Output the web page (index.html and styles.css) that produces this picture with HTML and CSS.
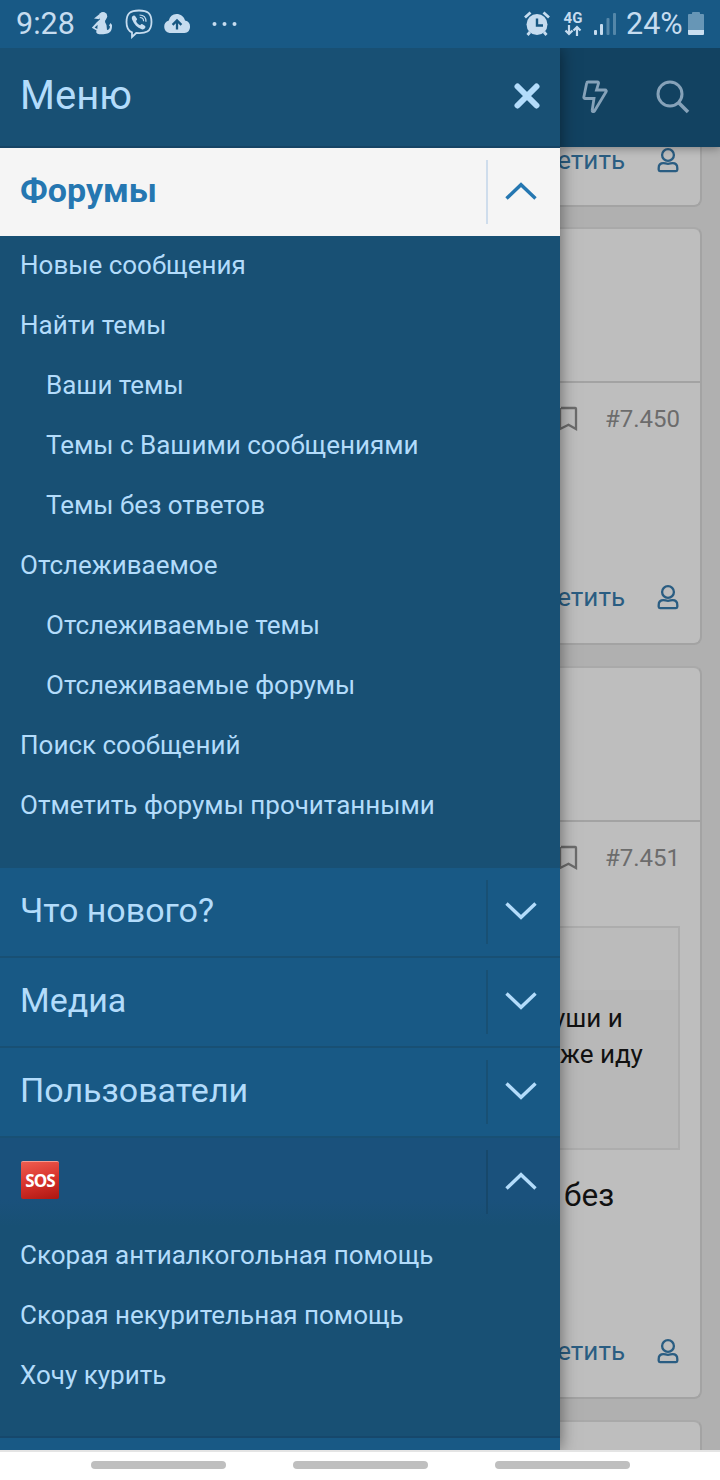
FILE: index.html
```html
<!DOCTYPE html>
<html lang="ru">
<head>
    <meta charset="UTF-8">
    <meta name="viewport" content="width=device-width, initial-scale=1.0">
    <title>Меню</title>
    <link rel="stylesheet" href="styles.css">
</head>
<body>
    <svg width="0" height="0" class="defs">
        <symbol id="chevron" viewBox="0 0 32 18">
            <path d="M1.500 1.500L16 15.300 30.500 1.500" fill="none" stroke="currentColor" stroke-width="3.400"/>
        </symbol>
        <symbol id="user" viewBox="0 0 22 26">
            <circle cx="11" cy="8" r="5.900" fill="none" stroke="currentColor" stroke-width="2.300"/>
            <path d="M6.500 16.200c1.500 0 2.500.6 4.500.6s3-.6 4.500-.6c3.200 0 4.800 2.200 4.800 4.800v1.800a1.300 1.300 0 0 1-1.300 1.300H3a1.300 1.300 0 0 1-1.300-1.300V21c0-2.600 1.600-4.800 4.800-4.800z" fill="none" stroke="currentColor" stroke-width="2.300"/>
        </symbol>
        <symbol id="bookmark" viewBox="0 0 18 26">
            <path d="M1 2h14.200a.8.8 0 0 1 .8.8V23l-7.500-4.300L0 23V2" fill="none" stroke="currentColor" stroke-width="2.300"/>
        </symbol>
    </svg>

    <div class="status-bar">
        <span class="clock">9:28</span>
        <svg class="ic-person" width="22" height="26" viewBox="0 0 22 26">
            <circle cx="12" cy="5.200" r="4.200" fill="currentColor"/>
            <path d="M8 3.500L3 7.500l5.500.8z" fill="currentColor"/>
            <path d="M9.500 8h5l-.5 3 1.500 3 .5 5c1.800 0 2.800-1.500 3-3.500l-1-1 1.500-2.500L21 14c.2 4-1 7.500-4.500 8.500-3 1-8 1-10 .2-1.500-.7-1.500-2-.9-3.200L.8 16.700 6 11z" fill="currentColor"/>
            <path d="M3.600 16.500l3-2.700-.3 4.200z" fill="#185782"/>
        </svg>
        <svg class="ic-viber" width="28" height="30" viewBox="0 0 28 30">
            <path d="M14 1.500C5.500 1.500 1.500 4 1.500 13c0 6 1.800 9 5.500 10.300V28l4.200-4c9.300.8 15.300-1 15.300-11 0-9-4-11.500-12.500-11.500z" fill="none" stroke="currentColor" stroke-width="1.800"/>
            <path d="M8.700 6.500C6.500 7.500 6.500 9 7.200 10.700c2 4.700 5 7.800 9.500 9.500 1.600.6 3-.3 3.700-2 .3-.8-.2-1.300-3-3-.8-.5-1.300 0-2.200 1-2-.7-3.700-2.500-4.200-4.400 1.300-1 1.300-1.500.8-2.300-1.500-2.500-2-3.400-3.100-3z" fill="currentColor"/>
            <path d="M14.500 6c4 0 6.500 2.500 6.500 6.700M14.800 8.500c2.400 0 3.800 1.400 3.800 3.800" fill="none" stroke="currentColor" stroke-width="1.200"/>
        </svg>
        <svg class="ic-cloud" width="28" height="22" viewBox="0 0 28 22">
            <path d="M6.500 20a6.500 6.500 0 0 1-.7-12.600A8.500 8.500 0 0 1 13.500 1c4 0 7.600 2.500 8.500 6.400A6.400 6.400 0 0 1 21.500 20z" fill="currentColor"/>
            <path d="M14 16.500V8M9.600 11.900L14 7.500l4.400 4.400" fill="none" stroke="#185782" stroke-width="2.300"/>
        </svg>
        <svg class="ic-dots" width="26" height="6" viewBox="0 0 26 6" fill="currentColor">
            <circle cx="2.500" cy="3" r="2"/><circle cx="12.500" cy="3" r="2"/><circle cx="22.500" cy="3" r="2"/>
        </svg>
        <div class="status-right">
            <svg class="ic-alarm" width="26" height="26" viewBox="0 0 26 26">
                <circle cx="13" cy="13.500" r="10.500" fill="currentColor"/>
                <path d="M1 6.500l5.500-5M25 6.500l-5.500-5M6 21l-2.500 3M20 21l2.500 3" stroke="currentColor" stroke-width="2.800"/>
                <path d="M13 7.500v7h6" fill="none" stroke="#185782" stroke-width="2.400"/>
            </svg>
            <div class="network">
                <span>4G</span>
                <svg width="18" height="11" viewBox="0 0 18 11">
                    <path d="M5 0v9M1.500 5.500L5 9l3.500-3.500M13 11V2M9.500 5.500L13 2l3.500 3.500" fill="none" stroke="currentColor" stroke-width="2.200"/>
                </svg>
            </div>
            <svg class="ic-signal" width="22" height="24" viewBox="0 0 22 24" fill="currentColor">
                <rect x="0" y="18" width="3" height="5" rx="1"/>
                <rect x="6" y="12" width="3" height="11" rx="1"/>
                <rect x="12.500" y="6" width="3" height="17" rx="1" opacity=".35"/>
                <rect x="19" y="1" width="3" height="22" rx="1" opacity=".35"/>
            </svg>
            <span class="percent">24%</span>
            <svg class="ic-battery" width="16" height="24" viewBox="0 0 16 24">
                <path d="M4 2V1a1 1 0 0 1 1-1h6a1 1 0 0 1 1 1v1h3a1 1 0 0 1 1 1v15H0V3a1 1 0 0 1 1-1z" fill="#6796b6"/>
                <path d="M0 18h16v4a1 1 0 0 1-1 1H1a1 1 0 0 1-1-1z" fill="#c9def0"/>
            </svg>
        </div>
    </div>

    <div class="screen">
        <nav class="drawer">
            <div class="drawer-header">
                <span>Меню</span>
                <svg width="26" height="26" viewBox="0 0 26 26">
                    <path d="M3.500 3.500l19 19M22.500 3.500l-19 19" stroke="currentColor" stroke-width="6" stroke-linecap="round"/>
                </svg>
            </div>

            <div class="menu-row selected">
                <span class="menu-title">Форумы</span>
                <div class="toggle"><svg class="chevron up"><use href="#chevron"/></svg></div>
            </div>
            <div class="submenu">
                <a>Новые сообщения</a>
                <a>Найти темы</a>
                <a class="nested">Ваши темы</a>
                <a class="nested">Темы с Вашими сообщениями</a>
                <a class="nested">Темы без ответов</a>
                <a>Отслеживаемое</a>
                <a class="nested">Отслеживаемые темы</a>
                <a class="nested">Отслеживаемые форумы</a>
                <a>Поиск сообщений</a>
                <a>Отметить форумы прочитанными</a>
            </div>

            <div class="menu-row bordered">
                <span class="menu-title">Что нового?</span>
                <div class="toggle"><svg class="chevron"><use href="#chevron"/></svg></div>
            </div>
            <div class="menu-row bordered">
                <span class="menu-title">Медиа</span>
                <div class="toggle"><svg class="chevron"><use href="#chevron"/></svg></div>
            </div>
            <div class="menu-row bordered">
                <span class="menu-title">Пользователи</span>
                <div class="toggle"><svg class="chevron"><use href="#chevron"/></svg></div>
            </div>
            <div class="menu-row open">
                <span class="sos">SOS</span>
                <div class="toggle"><svg class="chevron up"><use href="#chevron"/></svg></div>
            </div>
            <div class="submenu last">
                <a>Скорая антиалкогольная помощь</a>
                <a>Скорая некурительная помощь</a>
                <a>Хочу курить</a>
            </div>
        </nav>

        <main class="page">
            <header class="page-header">
                <svg class="ic-bolt" width="26" height="34" viewBox="0 0 26 34">
                    <path d="M6 2h9.500c.8 0 1.200.6 1 1.300L14.500 10h8.700c.9 0 1.400.9.900 1.700L12.500 31c-.7 1.200-2.600.7-2.300-.8L12 18.500H3c-.8 0-1.300-.6-1.200-1.300L4.700 3c.1-.6.600-1 1.300-1z" fill="none" stroke="currentColor" stroke-width="2.800"/>
                </svg>
                <svg class="ic-search" width="34" height="34" viewBox="0 0 34 34">
                    <circle cx="14" cy="14" r="12" fill="none" stroke="currentColor" stroke-width="3"/>
                    <path d="M22.500 22.500L32 32" stroke="currentColor" stroke-width="3.600"/>
                </svg>
            </header>
            <div class="posts">
                <article class="post first">
                    <footer><span>етить</span><svg><use href="#user"/></svg></footer>
                </article>
                <article class="post second">
                    <div class="post-user"></div>
                    <div class="post-meta"><svg><use href="#bookmark"/></svg><span>#7.450</span></div>
                    <footer><span>етить</span><svg><use href="#user"/></svg></footer>
                </article>
                <article class="post third">
                    <div class="post-user"></div>
                    <div class="post-meta"><svg><use href="#bookmark"/></svg><span>#7.451</span></div>
                    <blockquote>
                        <div class="quote-head"></div>
                        <p class="cut">уши и</p>
                        <p>же иду</p>
                    </blockquote>
                    <p class="post-text">без</p>
                    <footer><span>етить</span><svg><use href="#user"/></svg></footer>
                </article>
                <article class="post fourth"></article>
            </div>
        </main>
    </div>

    <div class="nav-bar">
        <i></i>
        <i></i>
        <i></i>
    </div>
</body>
</html>
```
FILE: styles.css
```css
* {
    box-sizing: border-box;
}

body {
    margin: 0;
    width: 720px;
    height: 1480px;
    overflow: hidden;
    display: flex;
    flex-direction: column;
    font-family: Roboto, sans-serif;
    background: #fff;
}

p, blockquote {
    margin: 0;
}

svg {
    flex: none;
}

.defs {
    display: none;
}

/* status bar */
.status-bar {
    flex: none;
    height: 48px;
    display: flex;
    align-items: center;
    padding: 0 16px;
    background: #185985;
    color: #c6dcef;
}

.clock {
    width: 75px;
    font-size: 30.5px;
    line-height: 48px;
    white-space: nowrap;
}

.ic-viber {
    margin-left: 12px;
}

.ic-cloud {
    margin-left: 10px;
}

.ic-dots {
    margin-left: 21px;
}

.status-right {
    margin-left: auto;
    display: flex;
    align-items: center;
}

.network {
    width: 20px;
    margin-left: 13px;
    display: flex;
    flex-direction: column;
    align-items: center;
    font-size: 15px;
    font-weight: 700;
    line-height: 13px;
}

.ic-signal {
    margin-left: 11px;
}

.percent {
    width: 55px;
    margin-left: 10px;
    margin-right: 7px;
    font-size: 30.5px;
    line-height: 48px;
    white-space: nowrap;
}

.screen {
    flex: none;
    height: 1402px;
    display: flex;
    overflow: hidden;
}

/* drawer */
.drawer {
    width: 560px;
    flex: none;
    z-index: 2;
    color: #b3dcfb;
    background: #185985;
    box-shadow: 0 0 16px rgba(0, 0, 0, 0.5);
}

.drawer-header {
    height: 100px;
    padding: 0 20px 4px;
    display: flex;
    align-items: center;
    justify-content: space-between;
    font-size: 40px;
    background: #185074;
    border-bottom: 2px solid #164465;
}

.drawer-header svg {
    margin-top: 2px;
}

.menu-row {
    height: 88px;
    display: flex;
    align-items: center;
    padding-left: 20px;
    font-size: 34px;
}

.menu-title {
    flex: 1;
    padding-bottom: 5px;
}

.menu-row.bordered {
    height: 90px;
    border-bottom: 2px solid #185074;
}

.menu-row.selected {
    background: #f5f5f5;
    color: #2577b1;
    font-weight: 700;
}

.menu-row.open {
    background: linear-gradient(#1a517c 70%, #185074);
}

.toggle {
    width: 74px;
    height: 64px;
    margin-left: auto;
    display: flex;
    align-items: center;
    padding-left: 17px;
    padding-bottom: 2px;
    border-left: 2px solid #185074;
}

.selected .toggle {
    border-color: #cfddec;
}

.open .toggle {
    border-color: #17486b;
}

.chevron {
    width: 32px;
    height: 18px;
}

.chevron.up {
    transform: rotate(180deg);
}

.submenu {
    padding-bottom: 30px;
    border-bottom: 2px solid #185074;
    background: #185074;
}

.submenu.last {
    border-color: #16486c;
}

.submenu a {
    display: block;
    height: 60px;
    padding-left: 20px;
    font-size: 26px;
    line-height: 58px;
    white-space: nowrap;
}

.submenu .nested {
    padding-left: 46px;
}

.sos {
    width: 38px;
    height: 38px;
    margin-left: 1px;
    margin-bottom: 4px;
    border-radius: 2px;
    border-top: 1px solid #f59a90;
    background: linear-gradient(165deg, #ee5d50, #d8332c 50%, #ad1611);
    color: #fff;
    font: 700 17px/37px "Open Sans", sans-serif;
    letter-spacing: -1px;
    text-align: center;
}

/* dimmed page behind the drawer */
.page {
    width: 160px;
    flex: none;
    display: flex;
    flex-direction: column;
    background: #b0b0b0;
}

.page-header {
    flex: none;
    height: 99px;
    display: flex;
    align-items: center;
    padding-left: 22px;
    padding-bottom: 2px;
    gap: 48px;
    background: #124261;
    color: #86a2b9;
    z-index: 1;
    box-shadow: 0 2px 8px rgba(0, 0, 0, 0.3);
}

.posts {
    flex: 1;
    overflow: hidden;
    display: flex;
    flex-direction: column;
    gap: 21px;
}

.post {
    flex: none;
    width: 142px;
    display: flex;
    flex-direction: column;
    background: #bebebe;
    border: 2px solid #a3a3a3;
    border-top-color: #a9a9a9;
    border-left: 0;
    border-radius: 0 8px 8px 0;
}

.post.first {
    height: 60px;
    border-top: 0;
    border-top-right-radius: 0;
}

.post.first footer {
    margin-bottom: 36px;
}

.post.second {
    height: 418px;
    margin-top: -1px;
}

.post.third {
    height: 733px;
}

.post.fourth {
    height: 80px;
}

.post-user {
    height: 154px;
    border-bottom: 2px solid #a3a3a3;
}

.post-meta {
    height: 72px;
    display: flex;
    align-items: center;
    justify-content: space-between;
    padding-right: 20px;
    font-size: 24px;
    color: #6c6c6c;
}

.post-meta svg {
    width: 18px;
    height: 26px;
}

.post footer {
    height: 26px;
    margin-top: auto;
    margin-bottom: 33px;
    display: flex;
    align-items: center;
    justify-content: flex-end;
    gap: 32px;
    padding-right: 21px;
    font-size: 26px;
    line-height: 26px;
    color: #2a5d82;
}

.post footer svg {
    width: 22px;
    height: 26px;
}

blockquote {
    width: 120px;
    height: 224px;
    margin-top: 32px;
    border: 2px solid #adadad;
    border-left: 0;
    background: #b8b8b8;
    color: #111;
    font-size: 26px;
    line-height: 36px;
    overflow: hidden;
}

blockquote .cut {
    margin-left: -7px;
}

.quote-head {
    height: 62px;
    margin-bottom: 10px;
    background: #bbb;
}

.post-text {
    padding: 26px 0 0 4px;
    font-size: 31.5px;
    line-height: 40px;
    color: #111;
}

/* android navigation */
.nav-bar {
    height: 30px;
    display: flex;
    justify-content: center;
    gap: 67px;
    padding-top: 9px;
    border-top: 2px solid #e4e4e4;
}

.nav-bar i {
    width: 135px;
    height: 8px;
    border-radius: 4px;
    background: #bfbfbf;
}
```
